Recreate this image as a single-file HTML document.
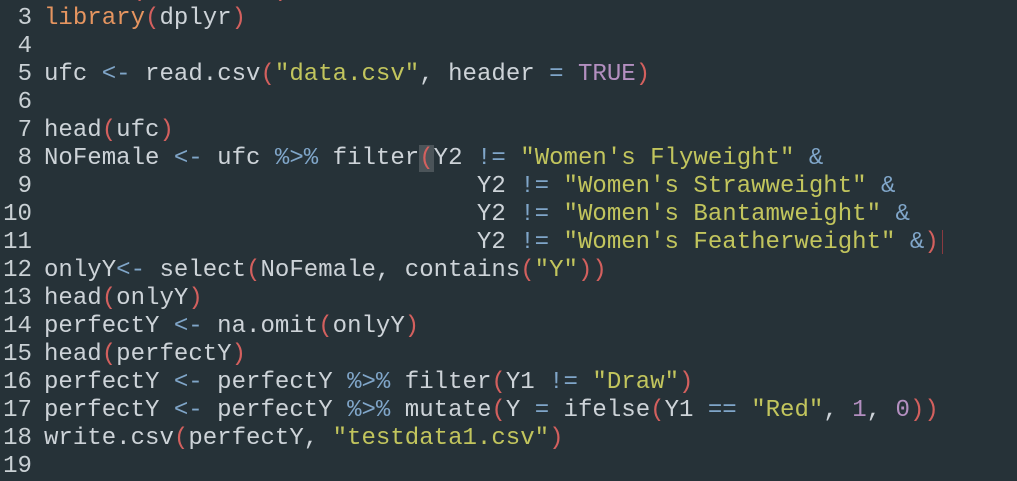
<!DOCTYPE html>
<html><head><style>
body{margin:0;width:1017px;height:462px;background:#263238;overflow:hidden;position:relative;font-family:"Liberation Mono",monospace;font-size:24.05px;color:#cdd3d8}
.l{position:absolute;left:0;height:28px;line-height:28px;white-space:pre}
.n{display:inline-block;width:32px;text-align:right;color:#c9d0d4;margin-right:12px}
.f{color:#e59560}.p{color:#d3605e}.o{color:#80a6c9}.s{color:#c2c55d}.k{color:#b38fc0}
.cur{background:#4b5459}
</style></head><body>
<div class="l" style="top:-23px"><span class="n"></span>      <span class="p">(</span>   <span class="s">"</span>     <span class="p">)</span></div>
<div class="l" style="top:5px"><span class="n">3</span><span class="f">library</span><span class="p">(</span>dplyr<span class="p">)</span></div>
<div class="l" style="top:33px"><span class="n">4</span></div>
<div class="l" style="top:61px"><span class="n">5</span>ufc <span class="o">&lt;-</span> read.csv<span class="p">(</span><span class="s">"data.csv"</span>, header <span class="o">=</span> <span class="k">TRUE</span><span class="p">)</span></div>
<div class="l" style="top:89px"><span class="n">6</span></div>
<div class="l" style="top:117px"><span class="n">7</span>head<span class="p">(</span>ufc<span class="p">)</span></div>
<div class="l" style="top:145px"><span class="n">8</span>NoFemale <span class="o">&lt;-</span> ufc <span class="o">%&gt;%</span> filter<span class="p cur">(</span>Y2 <span class="o">!=</span> <span class="s">"Women's Flyweight"</span> <span class="o">&amp;</span></div>
<div class="l" style="top:173px"><span class="n">9</span>                              Y2 <span class="o">!=</span> <span class="s">"Women's Strawweight"</span> <span class="o">&amp;</span></div>
<div class="l" style="top:201px"><span class="n">10</span>                              Y2 <span class="o">!=</span> <span class="s">"Women's Bantamweight"</span> <span class="o">&amp;</span></div>
<div class="l" style="top:229px"><span class="n">11</span>                              Y2 <span class="o">!=</span> <span class="s">"Women's Featherweight"</span> <span class="o">&amp;</span><span class="p">)</span><span style="display:inline-block;width:1px;height:24px;background:#8a3a40;vertical-align:middle;margin-left:3px"></span></div>
<div class="l" style="top:257px"><span class="n">12</span>onlyY<span class="o">&lt;-</span> select<span class="p">(</span>NoFemale, contains<span class="p">(</span><span class="s">"Y"</span><span class="p">))</span></div>
<div class="l" style="top:285px"><span class="n">13</span>head<span class="p">(</span>onlyY<span class="p">)</span></div>
<div class="l" style="top:313px"><span class="n">14</span>perfectY <span class="o">&lt;-</span> na.omit<span class="p">(</span>onlyY<span class="p">)</span></div>
<div class="l" style="top:341px"><span class="n">15</span>head<span class="p">(</span>perfectY<span class="p">)</span></div>
<div class="l" style="top:369px"><span class="n">16</span>perfectY <span class="o">&lt;-</span> perfectY <span class="o">%&gt;%</span> filter<span class="p">(</span>Y1 <span class="o">!=</span> <span class="s">"Draw"</span><span class="p">)</span></div>
<div class="l" style="top:397px"><span class="n">17</span>perfectY <span class="o">&lt;-</span> perfectY <span class="o">%&gt;%</span> mutate<span class="p">(</span>Y <span class="o">=</span> ifelse<span class="p">(</span>Y1 <span class="o">==</span> <span class="s">"Red"</span>, <span class="k">1</span>, <span class="k">0</span><span class="p">))</span></div>
<div class="l" style="top:425px"><span class="n">18</span>write.csv<span class="p">(</span>perfectY, <span class="s">"testdata1.csv"</span><span class="p">)</span></div>
<div class="l" style="top:453px"><span class="n">19</span></div>
</body></html>
